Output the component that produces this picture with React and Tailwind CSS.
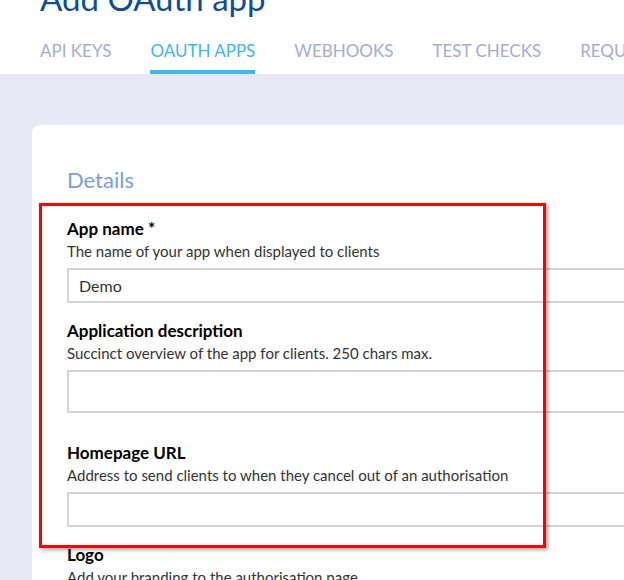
import { useState } from "react";

const TABS = ["API Keys", "OAuth apps", "Webhooks", "Test checks", "Requests"];

// One labelled field of the details form
function Field({ label, hint, value, tall, className }) {
  const [val, setVal] = useState(value || "");
  return (
    <div className={className}>
      <label className="block text-[17px] leading-5 font-bold text-black">
        {label}
      </label>
      <p className="mt-[2px] text-[15px] leading-5 text-[#333]">{hint}</p>
      {tall ? (
        <textarea
          value={val}
          onChange={(e) => setVal(e.target.value)}
          className="mt-[7px] block w-[620px] h-[43px] border-2 border-[#d4d4d4] px-[10px] py-[6px] text-[16px] resize-none outline-none"
        />
      ) : (
        <input
          value={val}
          onChange={(e) => setVal(e.target.value)}
          className="mt-[7px] block w-[620px] h-[35px] border-2 border-[#d4d4d4] px-[10px] text-[16px] text-[#333] outline-none"
        />
      )}
    </div>
  );
}

export default function App() {
  const [active, setActive] = useState(1);

  return (
    <div
      className="relative w-[624px] h-[580px] overflow-hidden bg-[#e6e9f5]"
      style={{ fontFamily: "Lato, 'Open Sans', sans-serif" }}
    >
      {/* Page header with tabs */}
      <div className="flex flex-col bg-white h-[74px] px-10">
        <h1 className="-mt-[22px] text-[33px] leading-[40px] text-[#0c4c9c] whitespace-nowrap">
          Add OAuth app
        </h1>
        <div className="flex gap-[39px] mt-[23px] whitespace-nowrap">
          {TABS.map((t, i) => (
            <button
              key={t}
              onClick={() => setActive(i)}
              className={
                "uppercase text-[17px] leading-5 pb-[9px] border-b-4 " +
                (i === active
                  ? "text-[#3db5f2] border-[#3cb8ff]"
                  : "text-[#a3acd2] border-transparent")
              }
            >
              {t}
            </button>
          ))}
        </div>
      </div>

      {/* Details card */}
      <div className="ml-8 mt-[51px] w-[700px] h-[600px] bg-white rounded-lg pl-[35px] pt-[42px]">
        <h2 className="text-[22px] leading-[26px] text-[#7a9edd]">Details</h2>
        <Field
          className="mt-[26px]"
          label="App name *"
          hint="The name of your app when displayed to clients"
          value="Demo"
        />
        <Field
          className="mt-[18px]"
          label="Application description"
          hint="Succinct overview of the app for clients. 250 chars max."
          tall
        />
        <Field
          className="mt-[30px]"
          label="Homepage URL"
          hint="Address to send clients to when they cancel out of an authorisation"
        />
        <div className="mt-[18px]">
          <p className="text-[17px] leading-5 font-bold text-black">Logo</p>
          <p className="mt-[2px] text-[15px] leading-5 text-[#333]">
            Add your branding to the authorisation page
          </p>
        </div>
      </div>

      {/* Highlight frame over the first three fields */}
      <div className="absolute left-[39px] top-[203px] w-[507px] h-[345px] border-[3px] border-[#ff0000] shadow-[2px_2px_4px_rgba(0,0,0,0.35)] pointer-events-none" />
    </div>
  );
}
